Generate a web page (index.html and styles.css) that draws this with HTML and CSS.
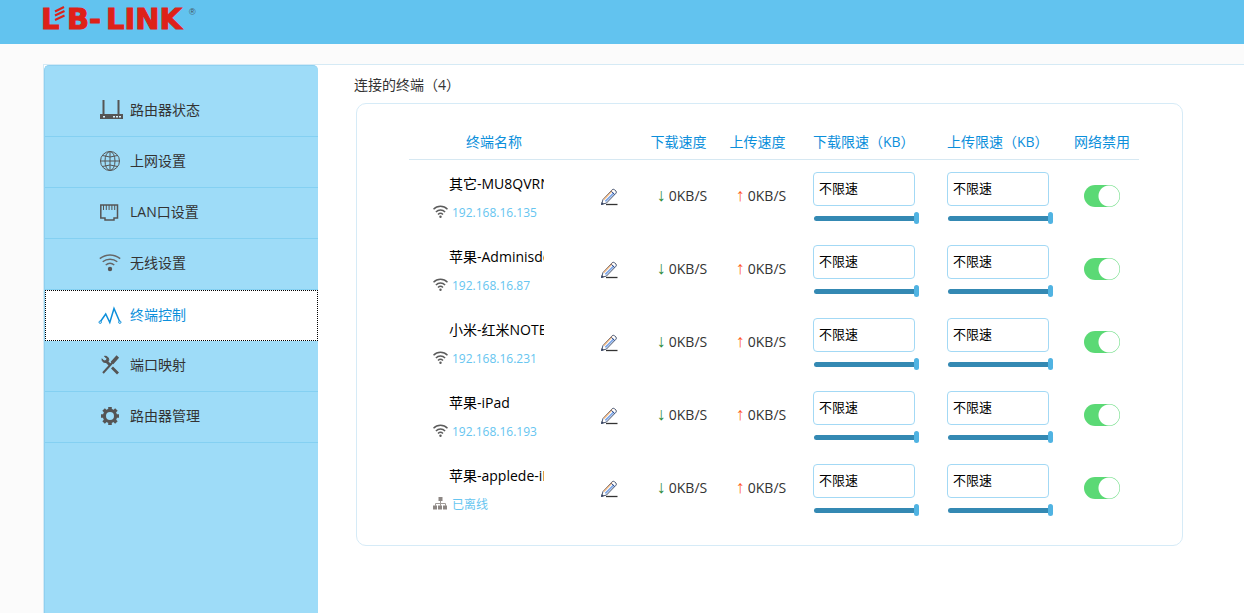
FILE: index.html
```html
<!DOCTYPE html>
<html lang="zh-CN">
<head>
<meta charset="utf-8">
<title>终端控制</title>
<link rel="stylesheet" href="styles.css">
</head>
<body>
<svg class="sprite" aria-hidden="true">
  <symbol id="wifi" viewBox="0 0 15 13">
    <g fill="none" stroke="#5c5c5c" stroke-width="1.5"><path d="M.5 4.200a9.800 9.800 0 0 1 14 0"/><path d="M2.900 7a6.500 6.500 0 0 1 9.200 0"/><path d="M5 9.500a3.600 3.600 0 0 1 5 0"/></g>
    <circle cx="7.500" cy="11.800" r="1.200" fill="#5c5c5c"/>
  </symbol>
  <symbol id="lan" viewBox="0 0 15 13">
    <path d="M5.500 0h4v4h-4zM0 8.500h4v4H0zM5 8.500h4v4H5zM10 8.500h4v4h-4z" fill="#8d8784"/>
    <path d="M7.500 4v5M2.500 9V6.500h10V9" fill="none" stroke="#a09b98"/>
  </symbol>
  <symbol id="pencil" viewBox="0 0 18 18">
    <path d="M1.500 16.500 3 11.500 12.300 1.600Q13.300.9 14.400 1.700L16 3.100Q16.800 4.100 16 5.200L6.500 15Z" fill="#fff" stroke="#46536e"/>
    <path d="M5.400 13.400 14 4.800" stroke="#7ea6e6" stroke-width="1.800"/>
    <path d="M3.800 11.500 12.300 2.600" stroke="#eeb27a" stroke-width="1.300"/>
    <path d="M11.300 3.400 14.600 6.600" stroke="#34508a" stroke-width="1"/>
    <path d="M1 17 1.800 14l2.200 2z" fill="#34415f"/>
    <path d="M6 16.500h11.500" stroke="#333" stroke-width="1.300"/>
  </symbol>
</svg>
<header class="topbar">
  <svg class="logo" width="160" height="36" viewBox="0 0 160 36" role="img" aria-label="LB-LINK">
    <text class="logo-text" x="-2" y="29">L</text>
    <text class="logo-text" x="24" y="29">B-</text>
    <text class="logo-text" x="63" y="29">LINK</text>
    <path d="M12 11.500 21 7M12 15.500 21.500 11M12 20 21.500 15.500" stroke="#de2118" stroke-width="2"/>
    <text class="logo-mark" x="146" y="15">®</text>
  </svg>
</header>
<div class="page">
  <nav class="sidebar">
    <a class="item" href="#"><svg class="icon" viewBox="0 0 24 24"><path d="M4.500 2v15M19.500 2v15" stroke="#555" stroke-width="2"/><path d="M1 16h23v5H1z" fill="#555"/><path d="M4 18h2v1.500H4zM14 18h2v1.500h-2zM17 18h2v1.500h-2zM20 18h2v1.500h-2z" fill="#d6eefa"/></svg>路由器状态</a>
    <a class="item" href="#"><svg class="icon" viewBox="0 0 24 24" fill="none" stroke="#555"><circle cx="11" cy="12" r="9.500"/><ellipse cx="11" cy="12" rx="5" ry="9.500"/><path d="M11 2.500v19M1.500 12h19M3.500 6.500q7.500 3 15 0M3.500 17.500q7.500-3 15 0"/></svg>上网设置</a>
    <a class="item" href="#"><svg class="icon" viewBox="0 0 24 24" fill="none" stroke="#555" stroke-width="1.500"><path d="M1.800 5h16.700v13H15v2H6v-2H1.800z"/><path d="M4.500 5v5M7.300 5v5M10.100 5v5M12.900 5v5M15.700 5v5" stroke-width="1"/></svg>LAN口设置</a>
    <a class="item" href="#"><svg class="icon" viewBox="0 0 24 24" fill="none" stroke="#666" stroke-width="1.400"><path d="M.8 7.600a16 16 0 0 1 20.400 0M3.700 10.800a11.500 11.500 0 0 1 14.600 0M6.700 14a6.800 6.800 0 0 1 8.600 0"/><circle cx="11" cy="18" r="2.200" fill="#555" stroke="none"/></svg>无线设置</a>
    <a class="item active" href="#" aria-current="page"><svg class="icon" viewBox="0 0 24 24" fill="none" stroke="#0c8fdb" stroke-width="1.500"><path d="M1.500 18.500 6.700 11l4.100 8.500L15 5.500l5.500 12.700"/><circle cx="1.200" cy="19.200" r="1.200" fill="#fff" stroke-width="1"/><circle cx="20.800" cy="19.200" r="1.200" fill="#fff" stroke-width="1"/></svg>终端控制</a>
    <a class="item" href="#"><svg class="icon" viewBox="0 0 24 24" fill="none" stroke="#555"><path d="M18.500 4 4 20" stroke-width="2"/><path d="M18.800 3.500 13 10" stroke-width="3.400"/><path d="M7.500 8.500 11 12M13 14.500 19 20.500" stroke-width="2.800"/><path d="M5.500 3.200 8 5.700 7.300 7.600 5 8 3 5.800Q3 9.800 7 9.500 10.800 8.500 9.400 5.100 8 2.700 5.500 3.200Z" fill="#555"/></svg>端口映射</a>
    <a class="item" href="#"><svg class="icon" viewBox="0 0 24 24" fill="none" stroke="#555"><circle cx="11" cy="12" r="5.600" stroke-width="3.200"/><path d="M11 3v3.500M11 17.500V21M2 12h3.500M16.500 12H20M4.600 5.600 7.100 8.100M14.900 15.900l2.500 2.500M17.400 5.600l-2.500 2.500M7.100 15.900l-2.500 2.500" stroke-width="3.600"/></svg>路由器管理</a>
  </nav>
  <main class="content">
    <h1 class="title">连接的终端（4）</h1>
    <section class="panel">
      <table class="devices">
        <colgroup><col class="c-name"><col class="c-edit"><col class="c-speed"><col class="c-speed"><col class="c-limit"><col class="c-limit"><col class="c-block"></colgroup>
        <thead><tr><th>终端名称</th><th></th><th>下载速度</th><th>上传速度</th><th class="left">下载限速（KB）</th><th class="left">上传限速（KB）</th><th>网络禁用</th></tr></thead>
        <tbody id="rows"></tbody>
      </table>
    </section>
  </main>
</div>
<script src="app.js"></script>
</body>
</html>
```
FILE: styles.css
```css
* { box-sizing: border-box; }
body {
  margin: 0;
  min-height: 100vh;
  display: flex;
  flex-direction: column;
  background: #fbfbfb;
  color: #333;
  font: 14px/20px "Open Sans", "Noto Sans CJK SC", sans-serif;
}
.sprite { display: none; }
.topbar { height: 44px; padding-left: 43px; background: #62c3ef; }
.logo { display: block; overflow: visible; }
.logo-text { font: bold 29px "DejaVu Sans", sans-serif; fill: #de2118; stroke: #de2118; }
.logo-mark { font: 9px "Liberation Sans", sans-serif; fill: #44545c; }
.page {
  flex: 1;
  display: flex;
  margin: 20px 0 0 43px;
  border: solid #d5eaf5;
  border-width: 1px 0 0 1px;
  background: #fff;
}
.sidebar {
  flex: none;
  width: 274px;
  padding-top: 20px;
  border-left: 1px solid #8fd0f0;
  border-top: 1px solid #8fd0f0;
  border-radius: 5px 5px 0 0;
  background: #9edcf8;
}
.item {
  display: flex;
  align-items: center;
  gap: 7px;
  height: 51px;
  padding: 0 0 2px 54px;
  border-bottom: 1px solid #84d0f2;
  color: #333;
  text-decoration: none;
}
.icon { flex: none; width: 24px; height: 24px; overflow: visible; }
.item.active { background: #fff; color: #0c8fdb; border: 1px dotted #000; padding-left: 53px; }
.content { flex: 1; padding: 10px 61px 0 36px; }
.title { margin: 0 0 8px; font-size: 14px; font-weight: normal; }
.panel {
  margin-left: 2px;
  padding: 0 43px 20px 52px;
  border: 1px solid #d6ebf7;
  border-radius: 10px;
}
.devices { width: 100%; table-layout: fixed; border-collapse: separate; border-spacing: 0; }
.c-name { width: 170px; }
.c-edit { width: 60px; }
.c-speed { width: 79px; }
.c-limit { width: 134px; }
.c-block { width: 74px; }
th {
  padding: 28px 0 7px;
  border-bottom: 1px solid #d6e8f2;
  color: #0c8fdb;
  font-weight: normal;
  text-align: center;
  white-space: nowrap;
}
th.left { padding-left: 16px; text-align: left; }
td { height: 73px; padding: 0 0 2px; text-align: center; vertical-align: middle; }
td.device { padding: 14px 0 0 24px; text-align: left; vertical-align: top; }
.name {
  width: 95px;
  margin: 0 0 9px 16px;
  overflow: hidden;
  white-space: nowrap;
  color: #000;
}
.address { display: flex; align-items: center; gap: 4px; color: #66c5f0; font-size: 12px; }
.address svg { width: 15px; height: 13px; margin-bottom: 3px; }
.edit { display: block; margin: 0 auto; padding: 2px 0 0; border: 0; background: none; }
.edit svg { display: block; width: 18px; height: 18px; }
td.speed { padding-left: 7px; white-space: nowrap; }
.arrow { margin-right: 3px; font: 18px/14px "Liberation Sans", sans-serif; }
.down { color: #2b8a3a; }
.up { color: #ff5a1f; }
td.limit { padding: 12px 0 0 16px; text-align: left; vertical-align: top; }
.limit-text {
  display: block;
  width: 102px;
  height: 34px;
  padding: 0 5px 3px;
  border: 1px solid #a3d9f5;
  border-radius: 4px;
  background: #fff;
  color: #000;
  font: 13px "Open Sans", "Noto Sans CJK SC", sans-serif;
}
.slider { appearance: none; display: block; width: 105px; height: 12px; margin: 6px 0 0 1px; background: none; }
.slider::-webkit-slider-runnable-track {
  height: 5px;
  border-radius: 3px;
  background: #3489b3;
}
.slider::-webkit-slider-thumb {
  appearance: none;
  width: 5px;
  height: 12px;
  margin-top: -4px;
  border-radius: 3px;
  background: #50b3e2;
}
.toggle {
  appearance: none;
  display: block;
  width: 36px;
  height: 22px;
  margin: 0 auto;
  border-radius: 11px;
  background: radial-gradient(circle at 25px 11px, #fff 10px, #5bd975 11px);
}
```
FILE: app.js
```javascript
const devices = [
  ["其它-MU8QVRN", "192.168.16.135", "wifi"],
  ["苹果-Adminisde", "192.168.16.87", "wifi"],
  ["小米-红米NOTE", "192.168.16.231", "wifi"],
  ["苹果-iPad", "192.168.16.193", "wifi"],
  ["苹果-applede-iP", "已离线", "lan"]
];
const limit = (label) => `<td class="limit">
  <input class="limit-text" type="text" value="不限速" aria-label="${label}">
  <input class="slider" type="range" min="0" max="100" value="100" aria-label="${label}"></td>`;
document.getElementById("rows").innerHTML = devices.map(([name, address, icon]) => `<tr>
  <td class="device"><div class="name">${name}</div><div class="address"><svg><use href="#${icon}"/></svg>${address}</div></td>
  <td><button class="edit" type="button" aria-label="编辑"><svg><use href="#pencil"/></svg></button></td>
  <td class="speed"><span class="arrow down">↓</span>0KB/S</td>
  <td class="speed"><span class="arrow up">↑</span>0KB/S</td>
  ${limit("下载限速")}${limit("上传限速")}
  <td><input class="toggle" type="checkbox" checked aria-label="网络禁用"></td>
</tr>`).join("");
```
